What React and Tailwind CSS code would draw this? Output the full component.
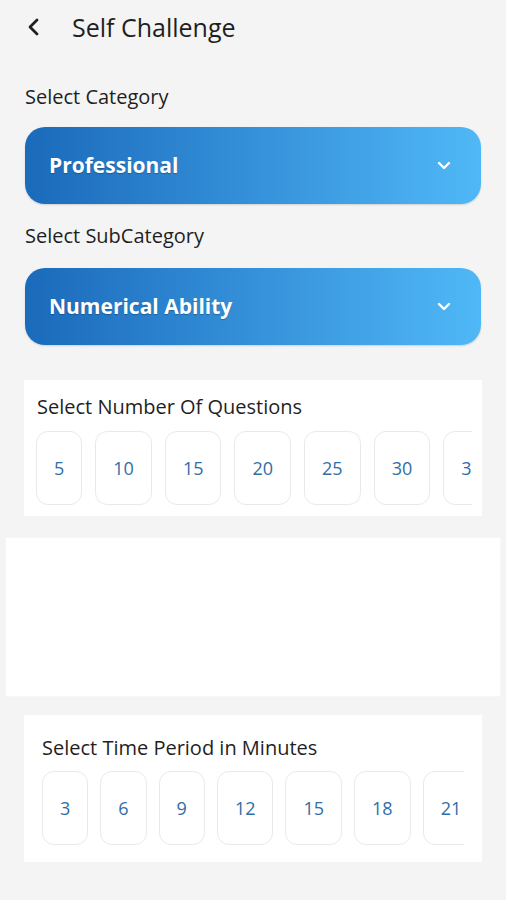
import React from "react";

function Chevron() {
  return (
    <svg width="14" height="9" viewBox="0 0 14 9" fill="none">
      <path d="M2 2l5 5 5-5" stroke="white" strokeWidth="2.4" strokeLinecap="round" strokeLinejoin="round" />
    </svg>
  );
}

function Dropdown({ label }) {
  return (
    <div className="h-[77px] rounded-[20px] bg-gradient-to-r from-[#1b6abb] to-[#50b8f7] flex items-center justify-between pl-[24px] pr-[30px] shadow-[0_1px_2px_rgba(0,0,0,0.15)]">
      <span className="text-white font-bold text-[21px] [text-shadow:0_1px_1px_rgba(0,0,0,0.25)]">{label}</span>
      <Chevron />
    </div>
  );
}

function Chip({ v }) {
  return (
    <div className="h-[74px] shrink-0 rounded-[12px] border border-[#e9e9e9] px-[17px] flex items-center justify-center text-[18px] text-[#2f6ea8] bg-white">
      {v}
    </div>
  );
}

export default function App() {
  const qs = ["5", "10", "15", "20", "25", "30", "35", "40"];
  const ts = ["3", "6", "9", "12", "15", "18", "21", "24"];
  return (
    <div className="w-[506px] min-h-[900px] bg-[#f4f4f4] font-['Open_Sans',sans-serif] text-[#1f1f1f]">
      <div className="h-[54px] flex items-center pl-[26px]">
        <svg width="16" height="20" viewBox="0 0 16 20" fill="none">
          <path d="M11 3L4 10l7 7" stroke="#1f1f1f" strokeWidth="2.8" strokeLinecap="round" strokeLinejoin="round" />
        </svg>
        <span className="ml-[30px] text-[25px] leading-none">Self Challenge</span>
      </div>

      <div className="px-[25px] mt-[31px]">
        <div className="text-[20px] leading-[24px]">Select Category</div>
        <div className="mt-[18px]">
          <Dropdown label="Professional" />
        </div>
        <div className="mt-[20px] text-[20px] leading-[24px]">Select SubCategory</div>
        <div className="mt-[20px]">
          <Dropdown label="Numerical Ability" />
        </div>
      </div>

      <div className="mx-[24px] mt-[35px] bg-white pt-[15px] pb-[11px] pl-[12px] pr-[10px]">
        <div className="text-[20px] leading-[24px] pl-[1px]">Select Number Of Questions</div>
        <div className="mt-[12px] flex gap-[13px] overflow-hidden">
          {qs.map((q) => (
            <Chip key={q} v={q} />
          ))}
        </div>
      </div>

      <div className="mx-[5px] mt-[21px] h-[160px] bg-white border border-[#f7f7f7]" />

      <div className="mx-[24px] mt-[18px] bg-white pt-[21px] pb-[17px] pl-[18px] pr-[18px]">
        <div className="text-[20px] leading-[24px]">Select Time Period in Minutes</div>
        <div className="mt-[11px] flex gap-[12px] overflow-hidden">
          {ts.map((t) => (
            <Chip key={t} v={t} />
          ))}
        </div>
      </div>
    </div>
  );
}
